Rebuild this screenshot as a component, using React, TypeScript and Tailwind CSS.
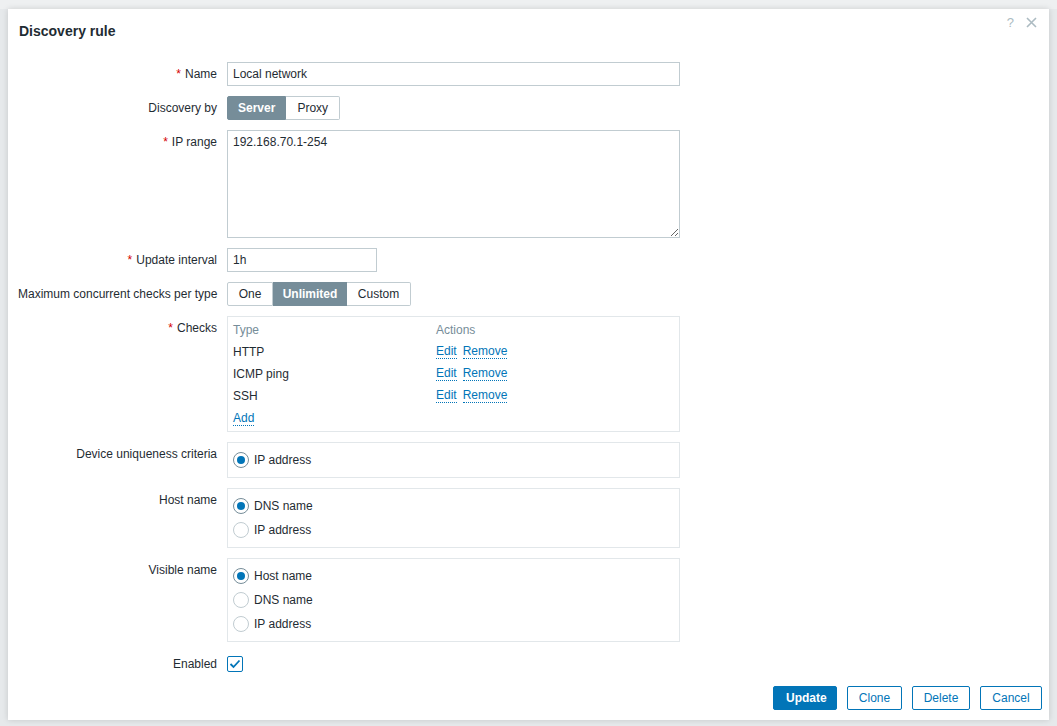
import React from "react";

const Req = () => <span className="text-[#d40000] mr-[4px]">*</span>;

function Label({ children, req }: { children: React.ReactNode; req?: boolean }) {
  return (
    <div className="text-right pt-[5px] leading-[14px] whitespace-nowrap text-[#1f2c33]">
      {req && <Req />}
      {children}
    </div>
  );
}

function Radio({ checked, label }: { checked?: boolean; label: string }) {
  return (
    <div className="flex items-center h-[24px]">
      <span
        className={
          "w-[16px] h-[16px] rounded-full border flex items-center justify-center bg-white " +
          (checked ? "border-[#768d99]" : "border-[#c1ccd1]")
        }
      >
        {checked && <span className="w-[8px] h-[8px] rounded-full bg-[#0275b8]" />}
      </span>
      <span className="ml-[5px] text-[#1f2c33]">{label}</span>
    </div>
  );
}

const Link = ({ children }: { children: React.ReactNode }) => (
  <a className="text-[#0275b8] border-b border-dotted border-[#0275b8] leading-[13px] cursor-pointer">{children}</a>
);

export default function App() {
  return (
    <div
      className="w-[1057px] h-[726px] bg-[#e6e9eb] overflow-hidden relative text-[12px]"
      style={{ fontFamily: '"Liberation Sans", Arial, sans-serif' }}
    >
      <div className="h-[9px] bg-[#eef0f1]" />
      <div className="ml-[8px] w-[1041px] h-[711px] bg-white shadow-[0_0_6px_rgba(0,0,0,0.15)] relative flex flex-col">
        <div className="absolute right-[12px] top-[4px] flex items-center gap-[12px] text-[#acbbc2]">
          <span className="text-[13px]">?</span>
          <svg width="11" height="11" viewBox="0 0 11 11">
            <path d="M1 1 L10 10 M10 1 L1 10" stroke="#acbbc2" strokeWidth="1.6" />
          </svg>
        </div>
        <div className="pl-[11px] pt-[12px] h-[53px] text-[14px] font-bold text-[#1f2c33]">Discovery rule</div>
        <div className="grid grid-cols-[199px_453px] gap-x-[10px] gap-y-[10px] pl-[10px]">
          <Label req>Name</Label>
          <input
            defaultValue="Local network"
            className="h-[24px] border border-[#c1ccd1] px-[5px] text-[#1f2c33] outline-none"
          />

          <Label>Discovery by</Label>
          <div className="flex h-[24px]">
            <div className="px-[10px] flex items-center bg-[#768d99] text-white font-bold border border-[#768d99] rounded-l-[2px]">Server</div>
            <div className="px-[11px] flex items-center border border-[#c1ccd1] border-l-0 rounded-r-[2px] text-[#1f2c33]">Proxy</div>
          </div>

          <Label req>IP range</Label>
          <textarea
            defaultValue="192.168.70.1-254"
            className="h-[108px] border border-[#c1ccd1] px-[5px] py-[4px] text-[#1f2c33] outline-none leading-[14px]"
          />

          <Label req>Update interval</Label>
          <div>
            <input defaultValue="1h" className="w-[150px] h-[24px] border border-[#c1ccd1] px-[5px] text-[#1f2c33] outline-none" />
          </div>

          <Label>Maximum concurrent checks per type</Label>
          <div className="flex h-[24px]">
            <div className="w-[46px] justify-center flex items-center border border-[#c1ccd1] rounded-l-[2px] text-[#1f2c33]">One</div>
            <div className="w-[74px] justify-center flex items-center bg-[#768d99] text-white font-bold border border-[#768d99]">Unlimited</div>
            <div className="w-[64px] justify-center flex items-center border border-[#c1ccd1] border-l-0 rounded-r-[2px] text-[#1f2c33]">Custom</div>
          </div>

          <Label req>Checks</Label>
          <div className="border border-[#e2e7ea] pl-[5px] pt-[2px] pb-[2px] h-[116px]">
            <div className="grid grid-cols-[203px_1fr] auto-rows-[22px] items-center">
              <div className="text-[#768d99]">Type</div>
              <div className="text-[#768d99]">Actions</div>
              <div className="text-[#1f2c33]">HTTP</div>
              <div className="flex gap-[6px]"><Link>Edit</Link><Link>Remove</Link></div>
              <div className="text-[#1f2c33]">ICMP ping</div>
              <div className="flex gap-[6px]"><Link>Edit</Link><Link>Remove</Link></div>
              <div className="text-[#1f2c33]">SSH</div>
              <div className="flex gap-[6px]"><Link>Edit</Link><Link>Remove</Link></div>
              <div><Link>Add</Link></div>
              <div />
            </div>
          </div>

          <Label>Device uniqueness criteria</Label>
          <div className="border border-[#e2e7ea] px-[5px] py-[5px]">
            <Radio checked label="IP address" />
          </div>

          <Label>Host name</Label>
          <div className="border border-[#e2e7ea] px-[5px] py-[5px]">
            <Radio checked label="DNS name" />
            <Radio label="IP address" />
          </div>

          <Label>Visible name</Label>
          <div className="border border-[#e2e7ea] px-[5px] py-[5px]">
            <Radio checked label="Host name" />
            <Radio label="DNS name" />
            <Radio label="IP address" />
          </div>

          <Label>Enabled</Label>
          <div className="h-[24px] flex items-center">
            <span className="w-[16px] h-[16px] border border-[#0275b8] rounded-[2px] flex items-center justify-center bg-white">
              <svg width="12" height="10" viewBox="0 0 12 10">
                <path d="M1.5 5 L4.5 8 L10.5 1.5" stroke="#0275b8" strokeWidth="1.8" fill="none" />
              </svg>
            </span>
          </div>
        </div>
        <div className="mt-auto flex justify-end gap-[10px] pr-[7px] pb-[10px]">
          <button className="h-[24px] px-[12px] bg-[#0275b8] text-white font-bold rounded-[2px] border border-[#0275b8] w-[64px]">Update</button>
          <button className="h-[24px] border border-[#0275b8] text-[#0275b8] rounded-[2px] w-[55px]">Clone</button>
          <button className="h-[24px] border border-[#0275b8] text-[#0275b8] rounded-[2px] w-[58px]">Delete</button>
          <button className="h-[24px] border border-[#0275b8] text-[#0275b8] rounded-[2px] w-[62px]">Cancel</button>
        </div>
      </div>
    </div>
  );
}
